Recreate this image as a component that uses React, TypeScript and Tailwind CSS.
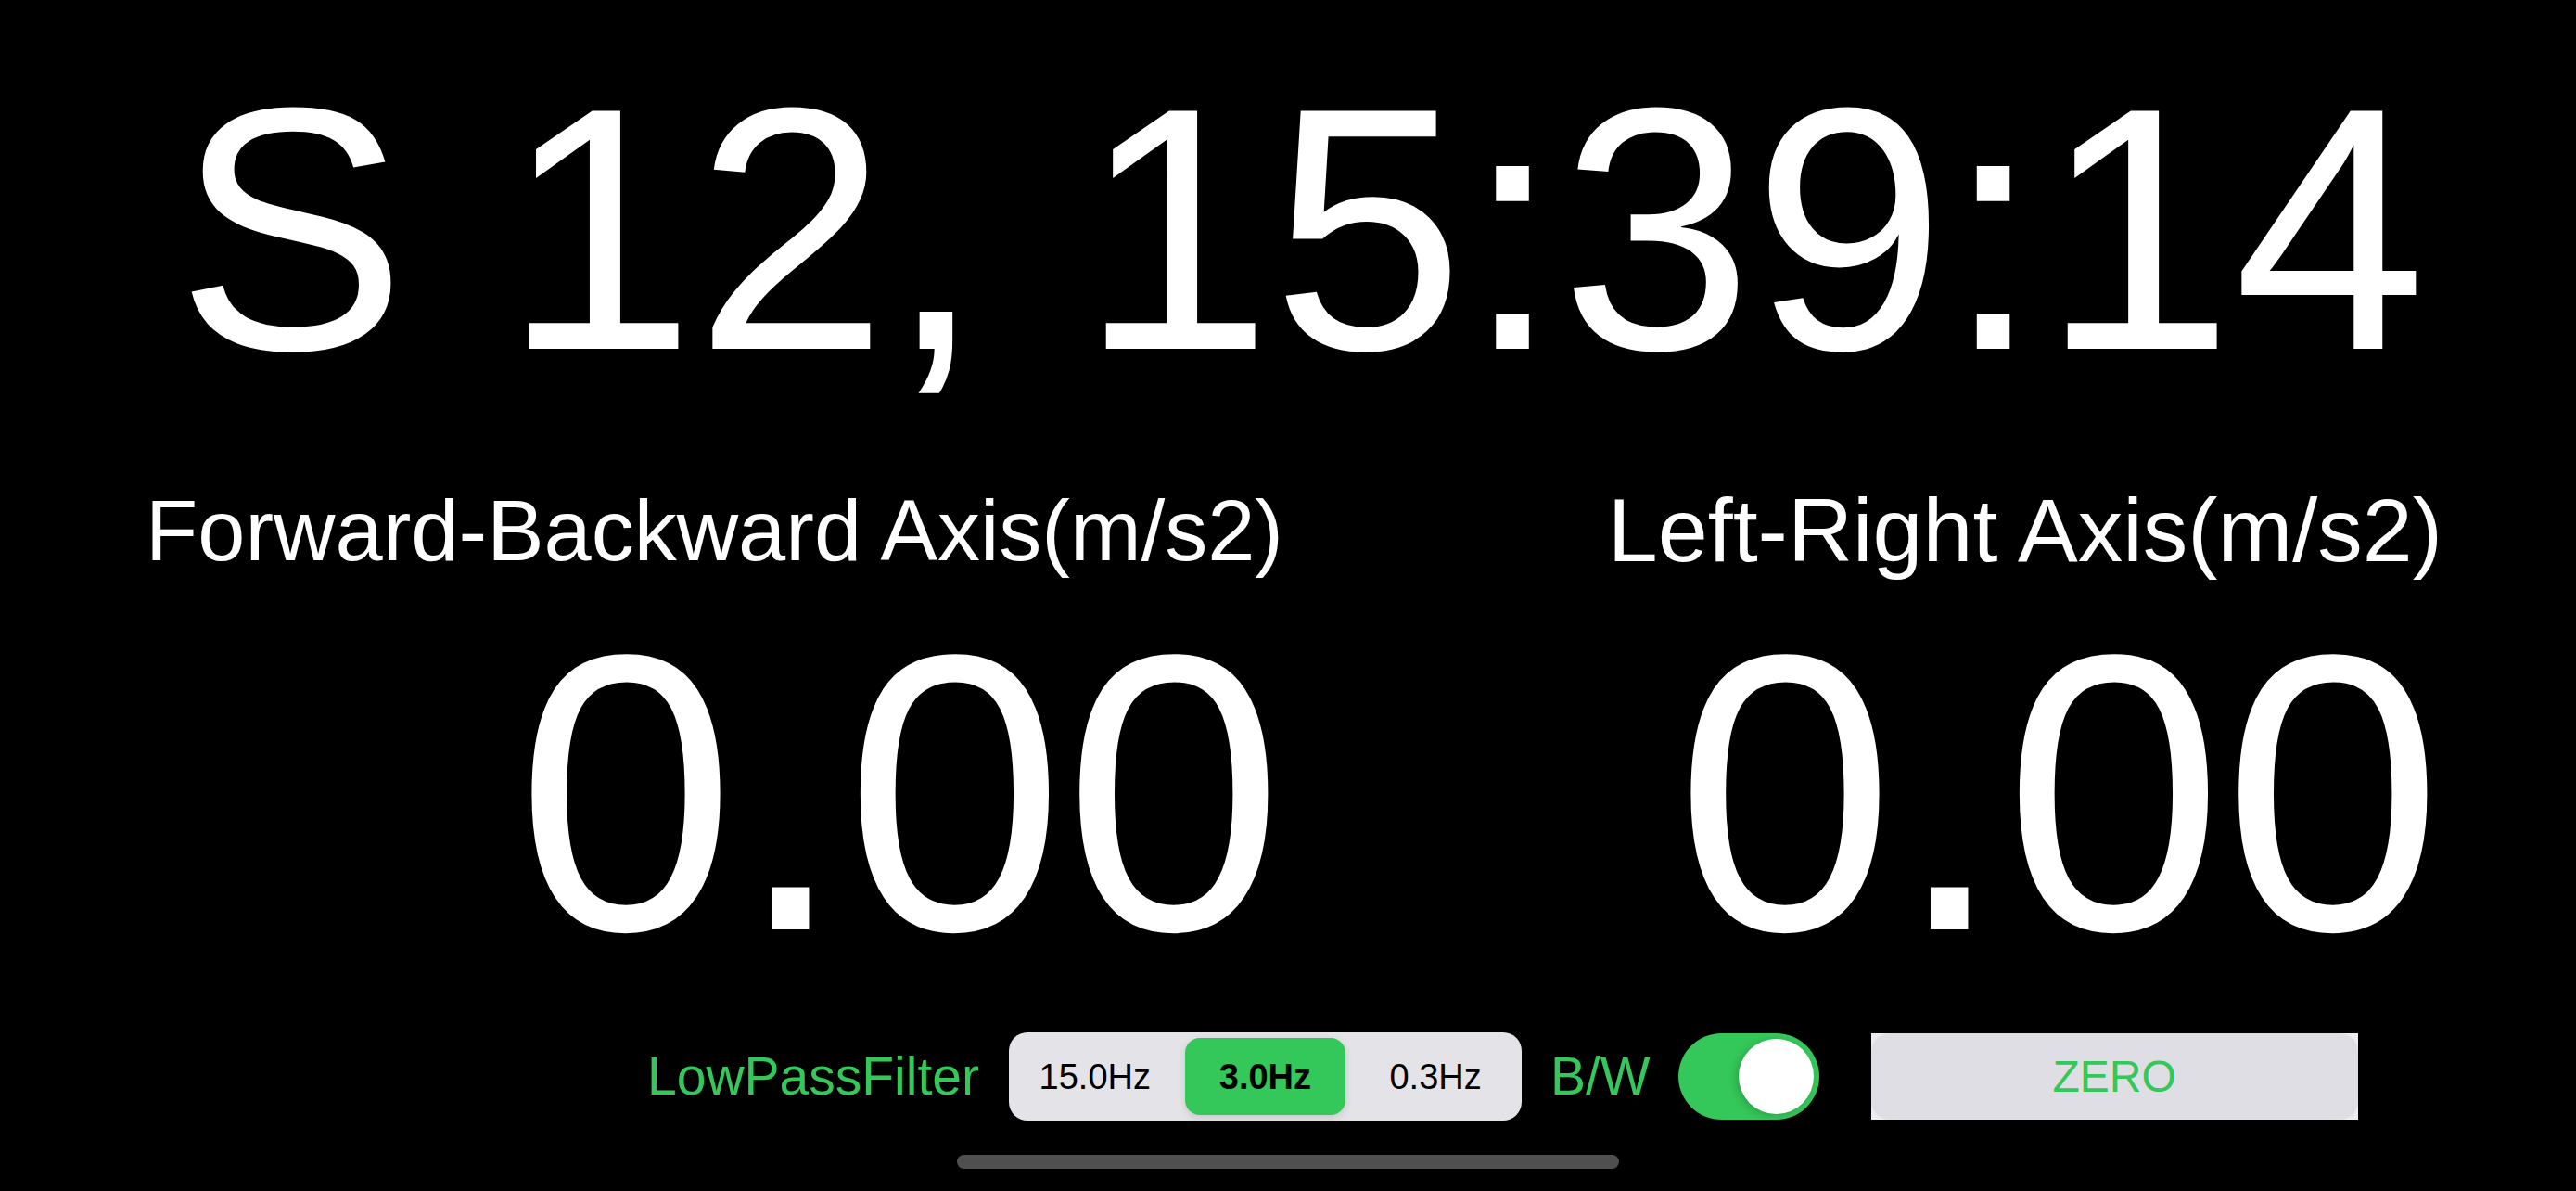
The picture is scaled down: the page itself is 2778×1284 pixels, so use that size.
import React from "react";

const segments = ["15.0Hz", "3.0Hz", "0.3Hz"];

const AxisReading = (props: { label: string; size: string }) => {
  return (
    <div className="flex flex-col items-end">
      <div className={`${props.size} leading-[96px] text-white whitespace-nowrap`}>
        {props.label}
      </div>
      <div className="mt-[22px] text-[425px] leading-none text-white">0.00</div>
    </div>
  );
};

export default function App() {
  const selected = 1;
  return (
    <div
      className="relative h-[1284px] w-full overflow-hidden bg-black"
      style={{ fontFamily: '"Liberation Sans", Arial, sans-serif' }}
    >
      <div className="pt-[60px] pl-[28px] text-center text-[373px] leading-none text-white whitespace-nowrap">
        S 12, 15:39:14
      </div>

      <div className="mt-[91px] grid grid-cols-2 pl-[134px] pr-[144px]">
        <AxisReading label="Forward-Backward Axis(m/s2)" size="text-[92px]" />
        <AxisReading label="Left-Right Axis(m/s2)" size="text-[97px]" />
      </div>

      <div className="mt-[46px] flex items-center pl-[698px]">
        <span className="text-[57px] leading-none text-[#34c759]">LowPassFilter</span>

        <div className="ml-[32px] grid h-[95px] w-[553px] grid-cols-3 gap-[10px] rounded-[20px] bg-[#e3e3e8] p-[6px]">
          {segments.map((s, i) => (
            <div
              key={s}
              className={
                i === selected
                  ? "flex items-center justify-center rounded-[16px] bg-[#34c759] text-[38px] font-bold leading-none text-black shadow-[0_3px_8px_rgba(0,0,0,0.12)]"
                  : "flex items-center justify-center text-[38px] leading-none text-black"
              }
            >
              {s}
            </div>
          ))}
        </div>

        <span className="ml-[31px] text-[57px] leading-none text-[#34c759]">B/W</span>

        <div className="ml-[30px] flex h-[93px] w-[152px] items-center justify-end rounded-full bg-[#34c759] p-[6px]">
          <div className="h-[81px] w-[81px] rounded-full bg-white shadow-[-3px_2px_8px_rgba(0,0,0,0.18)]" />
        </div>

        <div className="ml-[56px] h-[93px] w-[525px] bg-[#ececf0]">
          <div className="flex h-full w-full items-center justify-center rounded-[20px] bg-[#dedee4] text-[48px] leading-none text-[#34c759]">
            ZERO
          </div>
        </div>
      </div>

      <div className="absolute bottom-[24px] left-1/2 h-[15px] w-[714px] -translate-x-1/2 rounded-full bg-[#4f4f4f]" />
    </div>
  );
}
